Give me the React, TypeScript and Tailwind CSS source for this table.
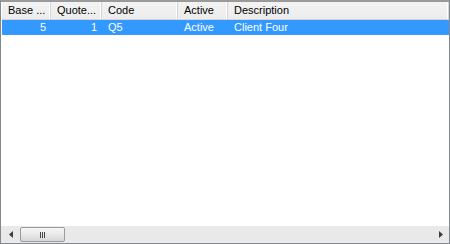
import { ReactNode } from "react";

const columns = [
  { label: "Base ...", width: "w-[49px]" },
  { label: "Quote...", width: "w-[51px]" },
  { label: "Code", width: "w-[76px]" },
  { label: "Active", width: "w-[50px]" },
  { label: "Description", width: "flex-1" },
];

const HeaderCell = ({ children, width }: { children: ReactNode; width: string }) => (
  <div
    className={`${width} flex h-full items-center border-r border-r-[#d5d5d5] pl-[6px] shadow-[inset_-1px_0_0_#ffffff]`}
  >
    {children}
  </div>
);

export default function App() {
  return (
    <div
      className="flex h-[244px] w-[450px] flex-col border border-[#828790] border-t-2 border-t-[#9a9a9a] bg-white text-[11px] text-black"
      style={{ fontFamily: '"Liberation Sans", Arial, sans-serif' }}
    >
      <div className="flex h-[18px] shrink-0 border-l border-l-white bg-gradient-to-b from-[#f3f3f3] to-[#ececec] border-b border-b-[#d5d5d5]">
        {columns.map((c) => (
          <HeaderCell key={c.label} width={c.width}>
            {c.label}
          </HeaderCell>
        ))}
      </div>

      <div className="flex-1 pl-px">
        <div className="flex h-[15px] items-center bg-[#3399ff] text-white">
          <div className="w-[49px] pr-[5px] text-right">5</div>
          <div className="w-[51px] pr-[5px] text-right">1</div>
          <div className="w-[76px] pl-[6px]">Q5</div>
          <div className="w-[50px] pl-[6px]">Active</div>
          <div className="flex-1 pl-[6px]">Client Four</div>
        </div>
      </div>

      <div className="flex h-[17px] shrink-0 items-center bg-[#e9e9e9]">
        <div className="flex w-[19px] items-center justify-center">
          <svg width="4" height="7" viewBox="0 0 4 7">
            <path d="M4 0 L0 3.5 L4 7 Z" fill="#3c3c3c" />
          </svg>
        </div>
        <div className="flex h-[15px] w-[45px] items-center justify-center rounded-[2px] border border-[#9c9c9c] bg-gradient-to-b from-[#f6f6f6] via-[#e8e8e8] to-[#d6d6d6]">
          <div className="flex gap-[1px]">
            <div className="h-[6px] w-px bg-[#444]" />
            <div className="h-[6px] w-px bg-[#444]" />
            <div className="h-[6px] w-px bg-[#444]" />
          </div>
        </div>
        <div className="flex-1" />
        <div className="flex w-[17px] items-center justify-center">
          <svg width="4" height="7" viewBox="0 0 4 7">
            <path d="M0 0 L4 3.5 L0 7 Z" fill="#3c3c3c" />
          </svg>
        </div>
      </div>
    </div>
  );
}
